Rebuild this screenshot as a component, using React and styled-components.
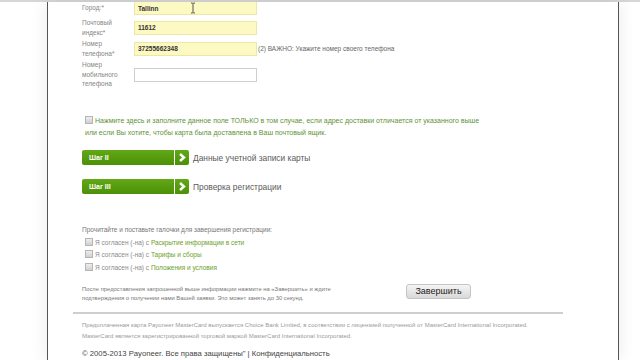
import React from "react";
import styled, { createGlobalStyle } from "styled-components";

const Global = createGlobalStyle`
  html, body { margin: 0; padding: 0; background: #fff; }
  body { font-family: "Liberation Sans", Arial, sans-serif; overflow: hidden; }
  #root { width: 640px; height: 360px; overflow: hidden; }
`;

const TopLine = styled.div`
  height: 2px;
  background: #d6d6d6;
`;

const Sheet = styled.div`
  position: relative;
  margin-left: 47px;
  width: 536px;
  height: 358px;
  border-left: 1px solid #555;
  border-right: 1px solid #555;
  box-shadow: 0 0 16px rgba(0, 0, 0, 0.09);
  background: #fff;
  padding: 0 0 0 34px;
  box-sizing: content-box;
  overflow: hidden;
`;

const FormGrid = styled.div`
  display: grid;
  grid-template-columns: 52px 123px auto;
  row-gap: 2px;
  align-items: center;
  margin-top: -2px;
`;

const Label = styled.div`
  font-size: 6.5px;
  line-height: 9.5px;
  color: #858585;
  min-height: ${(p) => p.$min || 16}px;
  display: flex;
  align-items: center;
`;

const Input = styled.div`
  height: 14px;
  box-sizing: border-box;
  border: 1px solid ${(p) => (p.$empty ? "#cfcfcf" : "#ebe7a6")};
  background: ${(p) => (p.$empty ? "#fff" : "#fdf9c2")};
  font-size: 6.5px;
  font-weight: bold;
  color: #333;
  padding: 0 3px;
  display: flex;
  align-items: center;
`;

const Hint = styled.div`
  font-size: 6.5px;
  color: #666;
  padding-left: 1px;
`;

const CheckBox = styled.span`
  display: inline-block;
  width: 6px;
  height: 6px;
  border: 1px solid #b5b5b5;
  background: linear-gradient(#eee, #cfcfcf);
  vertical-align: -1px;
  margin-right: 2px;
`;

const Notice = styled.p`
  margin: 26px 0 0;
  width: 400px;
  font-size: 7px;
  line-height: 12px;
  color: #5f9234;
  padding-left: 3px;
`;

const Steps = styled.div`
  display: flex;
  flex-direction: column;
  gap: 14px;
  margin-top: 11px;
`;

const StepRow = styled.div`
  display: flex;
  align-items: center;
  height: 15px;
`;

const StepBar = styled.div`
  width: 92px;
  height: 15px;
  box-sizing: border-box;
  border-radius: 2px 0 0 2px;
  background: linear-gradient(#62a818, #4c9006);
  color: #fff;
  font-size: 7px;
  font-weight: bold;
  display: flex;
  align-items: center;
  padding-left: 7px;
`;

const StepArrow = styled.div`
  width: 14px;
  height: 15px;
  margin-left: 1px;
  border-radius: 0 2px 2px 0;
  background: linear-gradient(#62a818, #4c9006);
  display: flex;
  align-items: center;
  justify-content: center;
`;

const StepText = styled.div`
  margin-left: 4px;
  font-size: 8.4px;
  color: #5a5a5a;
`;

const Terms = styled.div`
  margin-top: 32px;
  display: flex;
  flex-direction: column;
  gap: 3.5px;
`;

const TermsTitle = styled.div`
  font-size: 6.5px;
  color: #777;
  margin-bottom: 1px;
`;

const TermRow = styled.div`
  font-size: 6.5px;
  color: #8a8a8a;
  padding-left: 3px;
  line-height: 9px;
`;

const Link = styled.span`
  color: #6aa12a;
`;

const FinishRow = styled.div`
  display: flex;
  align-items: flex-start;
  margin-top: 12px;
`;

const FinishText = styled.div`
  width: 250px;
  font-size: 5.85px;
  line-height: 9.5px;
  color: #777;
  margin-top: 1px;
`;

const FinishButton = styled.div`
  margin-left: 74px;
  width: 65px;
  height: 15px;
  box-sizing: border-box;
  border: 1px solid #c4c4c4;
  border-radius: 3px;
  background: linear-gradient(#f5f5f5, #d8d8d8);
  font-size: 9px;
  color: #222;
  display: flex;
  align-items: center;
  justify-content: center;
`;

const Rule = styled.div`
  height: 2px;
  background: #cfcfcf;
  margin: 8px 0 0 -9px;
  width: 490px;
`;

const Legal = styled.div`
  margin-top: 6px;
  font-size: 6px;
  line-height: 11px;
  color: #9a9a9a;
`;

const Copyright = styled.div`
  margin-top: 7px;
  font-size: 7.7px;
  color: #444;
`;

const Cursor = styled.svg`
  position: absolute;
  left: 142px;
  top: 0;
`;

function Chevron() {
  return (
    <svg width="8" height="9" viewBox="0 0 8 9">
      <path d="M2 1 L6 4.5 L2 8" stroke="#fff" strokeWidth="2.4" fill="none" strokeLinejoin="miter" />
    </svg>
  );
}

export default function App() {
  return (
    <>
      <Global />
      <TopLine />
      <Sheet>
        <Cursor width="6" height="12" viewBox="0 0 6 12">
          <path d="M1 1 H2.5 L3 1.5 L3.5 1 H5 M3 1.5 V10.5 M1 11 H2.5 L3 10.5 L3.5 11 H5" stroke="#444" strokeWidth="0.9" fill="none" />
        </Cursor>
        <FormGrid>
          <Label $min={16}>Город:*</Label>
          <Input>Tallinn</Input>
          <span />
          <Label $min={19}>Почтовый<br />индекс*</Label>
          <Input>11612</Input>
          <span />
          <Label $min={19}>Номер<br />телефона*</Label>
          <Input>37255662348</Input>
          <Hint>(2) ВАЖНО: Укажите номер своего телефона</Hint>
          <Label $min={29}>Номер<br />мобильного<br />телефона</Label>
          <Input $empty />
          <span />
        </FormGrid>

        <Notice>
          <CheckBox />
          Нажмите здесь и заполните данное поле ТОЛЬКО в том случае, если адрес доставки отличается от указанного выше или если Вы хотите, чтобы карта была доставлена в Ваш почтовый ящик.
        </Notice>

        <Steps>
          <StepRow>
            <StepBar>Шаг II</StepBar>
            <StepArrow><Chevron /></StepArrow>
            <StepText>Данные учетной записи карты</StepText>
          </StepRow>
          <StepRow>
            <StepBar>Шаг III</StepBar>
            <StepArrow><Chevron /></StepArrow>
            <StepText>Проверка регистрации</StepText>
          </StepRow>
        </Steps>

        <Terms>
          <TermsTitle>Прочитайте и поставьте галочки для завершения регистрации:</TermsTitle>
          <TermRow><CheckBox />Я согласен (-на) с <Link>Раскрытие информации в сети</Link></TermRow>
          <TermRow><CheckBox />Я согласен (-на) с <Link>Тарифы и сборы</Link></TermRow>
          <TermRow><CheckBox />Я согласен (-на) с <Link>Положения и условия</Link></TermRow>
        </Terms>

        <FinishRow>
          <FinishText>
            После предоставления запрошенной выше информации нажмите на «Завершить» и ждите подтверждения о получении нами Вашей заявки. Это может занять до 30 секунд.
          </FinishText>
          <FinishButton>Завершить</FinishButton>
        </FinishRow>

        <Rule />

        <Legal>
          Предоплаченная карта Payoneer MasterCard выпускается Choice Bank Limited, в соответствии с лицензией полученной от MasterCard International Incorporated.<br />
          MasterCard является зарегистрированной торговой маркой MasterCard International Incorporated.
        </Legal>

        <Copyright>© 2005-2013 Payoneer. Все права защищены" | Конфиденциальность</Copyright>
      </Sheet>
    </>
  );
}
